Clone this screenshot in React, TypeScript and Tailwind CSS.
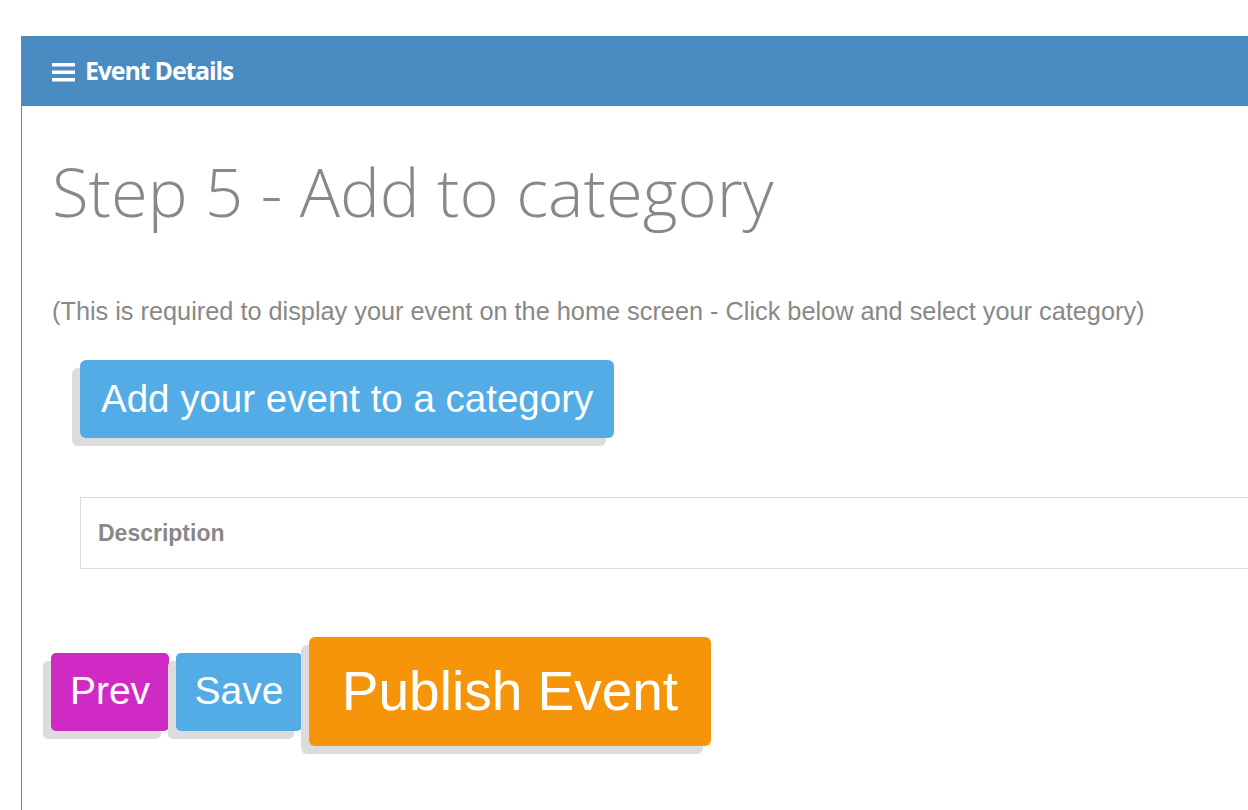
export default function App() {
  return (
    <div className="min-h-[810px] w-full overflow-hidden bg-white pt-[36px] pl-[21px]">
      <div className="w-[1300px] min-h-[774px] border-l border-[#4a8bc2]">
        <div className="flex h-[70px] items-center gap-[10px] bg-[#4a8bc2] pl-[30px] text-white">
          <svg width="23" height="20" viewBox="0 0 23 20" className="mt-[2px]">
            <rect x="0" y="1" width="23" height="3.5" fill="#fff" />
            <rect x="0" y="8.5" width="23" height="3.5" fill="#fff" />
            <rect x="0" y="16" width="23" height="3.5" fill="#fff" />
          </svg>
          <span className="font-['Open_Sans',sans-serif] text-[25px] font-bold tracking-[-1.2px]">Event Details</span>
        </div>

        <div className="pl-[30px]">
          <h1 className="mt-[52px] font-['Open_Sans',sans-serif] text-[67px] leading-none font-light text-[#888]">
            Step 5 - Add to category
          </h1>
          <p className="mt-[71px] font-['Liberation_Sans',Arial,sans-serif] text-[25.3px] leading-[31px] text-[#888]">
            (This is required to display your event on the home screen - Click below and select your category)
          </p>

          <button className="mt-[33px] ml-[28px] rounded-[6px] bg-[#53ace6] px-[21px] py-[16px] font-['Liberation_Sans',Arial,sans-serif] text-[38.5px] leading-[46px] text-white shadow-[-8px_8px_0_#dcdcdc]">
            Add your event to a category
          </button>

          <div className="mt-[59px] ml-[28px] flex h-[72px] items-center border border-[#ddd] pl-[17px]">
            <span className="font-['Liberation_Sans',Arial,sans-serif] text-[23px] font-bold text-[#888]">Description</span>
          </div>

          <div className="mt-[68px] flex items-center gap-[7px]">
            <button className="-ml-[1px] h-[78px] w-[118px] rounded-[5px] bg-[#d02ac4] font-['Liberation_Sans',Arial,sans-serif] text-[39px] text-white shadow-[-8px_8px_0_#dcdcdc]">
              Prev
            </button>
            <button className="h-[78px] w-[126px] rounded-[5px] bg-[#53ace6] font-['Liberation_Sans',Arial,sans-serif] text-[39px] text-white shadow-[-8px_8px_0_#dcdcdc]">
              Save
            </button>
            <button className="h-[109px] w-[402px] rounded-[6px] bg-[#f7950a] font-['Liberation_Sans',Arial,sans-serif] text-[55px] text-white shadow-[-8px_8px_0_#dcdcdc]">
              Publish Event
            </button>
          </div>
        </div>
      </div>
    </div>
  );
}
